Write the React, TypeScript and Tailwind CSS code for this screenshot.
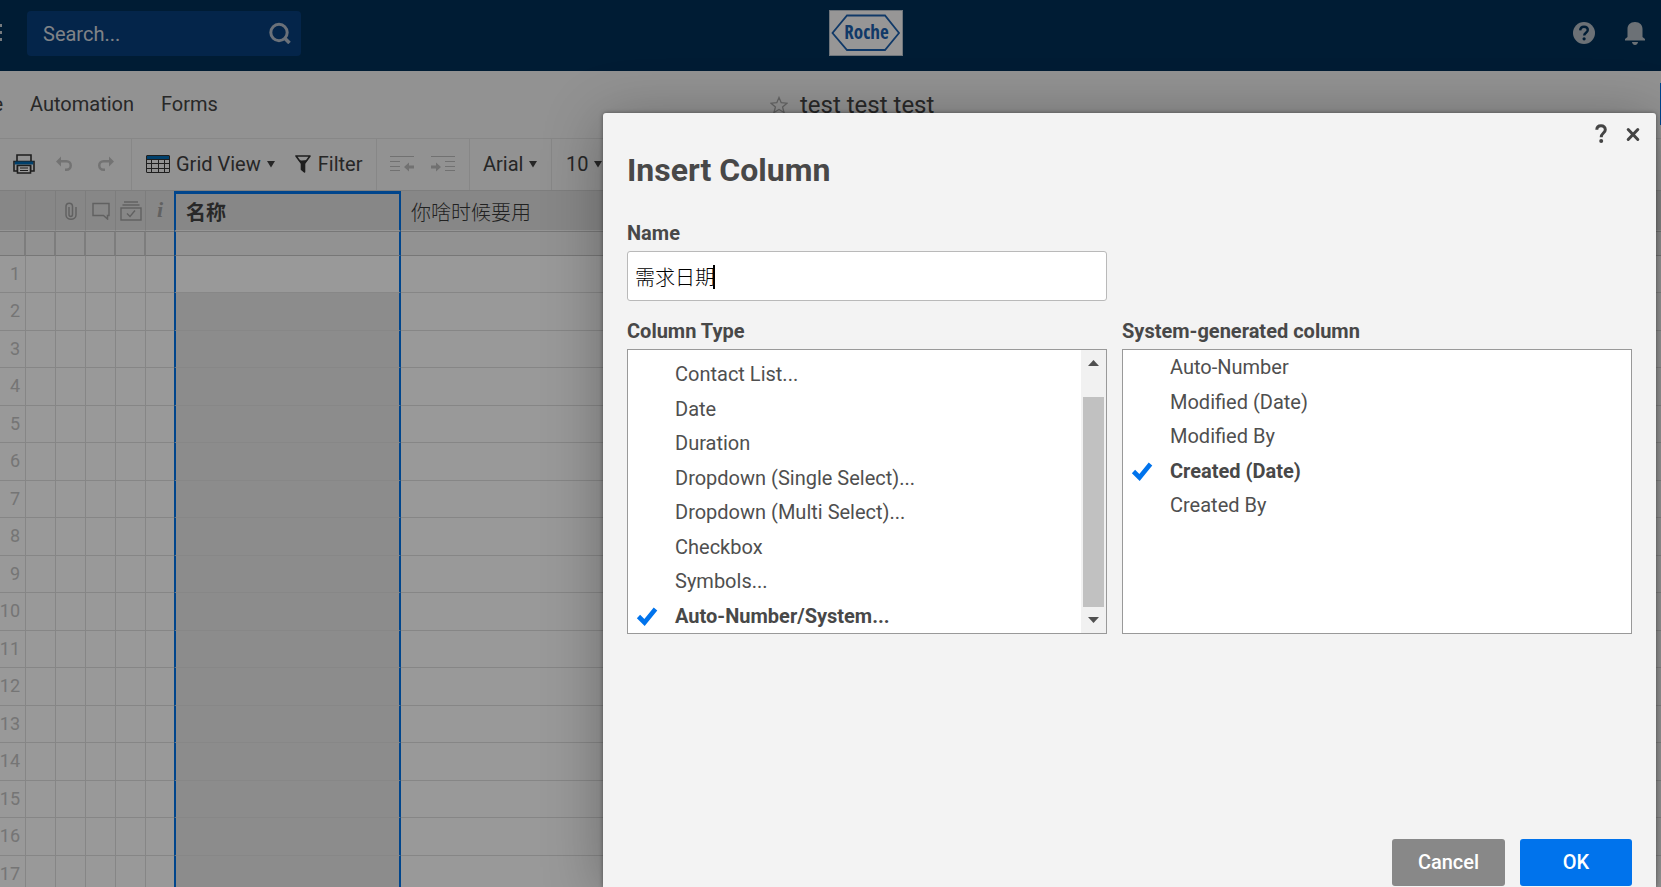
import { useState } from "react";
import type { ReactNode } from "react";

const COLUMN_TYPES = [
  "Contact List...",
  "Date",
  "Duration",
  "Dropdown (Single Select)...",
  "Dropdown (Multi Select)...",
  "Checkbox",
  "Symbols...",
  "Auto-Number/System...",
];

const SYSTEM_COLUMNS = ["Auto-Number", "Modified (Date)", "Modified By", "Created (Date)", "Created By"];

const ROWS = Array.from({ length: 17 }, (_, i) => i + 1);

function Caret() {
  return (
    <svg className="h-2 w-2 shrink-0" viewBox="0 0 8 8" aria-hidden="true">
      <path d="M0 1h8L4 7.500z" fill="currentColor" />
    </svg>
  );
}

function Logo() {
  return (
    <svg className="h-[46px] w-[74px]" viewBox="0 0 74 46" role="img" aria-label="Roche">
      <rect x="0.500" y="0.500" width="73" height="45" fill="#fcfbfa" stroke="#b9c3cd" />
      <path d="M18 5.500h38l14 17.500-14 17H18L3.500 23z" fill="none" stroke="#1c5fae" strokeWidth="1.800" />
      <text x="37.500" y="29" textAnchor="middle" fontFamily="Open Sans Condensed, Roboto Condensed, sans-serif" fontWeight="700" fontSize="19" fill="#1c5fae">
        Roche
      </text>
    </svg>
  );
}

function Header() {
  return (
    <header className="flex h-[71px] items-center bg-[#003057] pb-[5px] text-[#e6eaee]">
      <div className="flex flex-1 items-center">
        <svg className="h-5 w-[2px]" viewBox="0 0 2 20" aria-hidden="true">
          <path d="M0 1h2v3H0zM0 8h2v3H0zM0 15h2v3H0z" fill="#c5ccd3" />
        </svg>
        <label className="ml-[25px] flex h-[45px] w-[274px] items-center rounded-sm bg-[#073e7c] pr-[10px] pl-4">
          <input
            aria-label="Search"
            placeholder="Search..."
            className="min-w-0 flex-1 bg-transparent pt-px text-[20px] outline-none placeholder:text-[#d5dae0]"
          />
          <svg className="size-[22px]" viewBox="0 0 22 22" fill="none" stroke="#b3bdca" aria-hidden="true">
            <circle cx="10" cy="10.500" r="8.200" strokeWidth="3" />
            <path d="M15.500 16l5 5" strokeWidth="3.500" />
          </svg>
        </label>
      </div>
      <div className="ml-[86px]">
        <Logo />
      </div>
      <div className="flex flex-1 items-center justify-end gap-[30px] pr-4 text-[#b5bdc5]">
        <button aria-label="Help">
          <svg className="block size-[22px]" viewBox="0 0 22 22" aria-hidden="true">
            <circle cx="11" cy="11" r="11" fill="currentColor" />
            <path d="M7.200 8.400C7.300 6 8.800 4.700 11 4.700s3.800 1.300 3.800 3.400c0 2.600-3.600 2.800-3.600 5.500" fill="none" stroke="#003057" strokeWidth="2.400" />
            <circle cx="11.100" cy="16.800" r="1.600" fill="#003057" />
          </svg>
        </button>
        <button aria-label="Notifications">
          <svg className="block h-6 w-5" viewBox="0 0 20 24" aria-hidden="true">
            <path d="M10 1c4.800 0 7.500 3 7.500 7v8l2.500 2v1.500H0V18l2.500-2V8c0-4 2.700-7 7.500-7z" fill="currentColor" />
            <path d="M7 21h6c0 1.500-1.300 3-3 3s-3-1.500-3-3z" fill="currentColor" />
          </svg>
        </button>
      </div>
    </header>
  );
}

function MenuBar() {
  return (
    <div className="flex h-[68px] items-center border-b border-[#e2e2e2] text-[#444]">
      <nav className="-ml-[30px] flex w-[800px] shrink-0 items-center gap-[27px] pb-[2px] text-[20px]">
        <a href="#file" className="w-[33px] text-right">File</a>
        <a href="#automation">Automation</a>
        <a href="#forms">Forms</a>
      </nav>
      <div className="flex flex-1 items-center gap-3">
        <svg className="size-[18px]" viewBox="0 0 18 18" fill="none" stroke="#a8a8a8" strokeWidth="1.300" aria-hidden="true">
          <path d="M9 1.500l2.200 5.200 5.800.500-4.400 3.700 1.400 5.600-5-3-5 3 1.400-5.600L1 7.200l5.800-.500z" />
        </svg>
        <h1 className="pt-px text-[24px]">test test test</h1>
      </div>
      <div className="-mt-px h-[42px] w-px bg-[#0073ec]" />
    </div>
  );
}

function Toolbar() {
  return (
    <div className="flex h-[52px] items-stretch border-b border-[#d2d2d2] text-[20px] text-[#404040]">
      <div className="flex w-[132px] items-center border-r border-[#e2e2e2] pb-[2px] pl-[13px]">
        <button aria-label="Print">
          <svg className="block h-5 w-[22px]" viewBox="0 0 22 20" aria-hidden="true">
            <path d="M4 1h14v7H4z" fill="none" stroke="#333" strokeWidth="1.600" />
            <path d="M1 7.500h20V17h-3.500v-5h-13v5H1z" fill="#f3f3f3" stroke="#333" strokeWidth="1.600" />
            <path d="M1.800 7.500h18.400v3H1.800z" fill="#006bb5" />
            <path d="M4.500 11.500h13V19h-13z" fill="#fff" stroke="#333" strokeWidth="1.600" />
            <path d="M7 14h8M7 16.500h8" stroke="#333" strokeWidth="1.200" />
          </svg>
        </button>
        <button aria-label="Undo" className="ml-[21px] text-[#c0c0c0]">
          <svg className="block h-4 w-[17px]" viewBox="0 0 17 16" aria-hidden="true">
            <path d="M0 5.500L5 .500V4h5.500a5.500 5.500 0 0 1 0 11H9v-2.500h1.500a3 3 0 0 0 0-6H5v4z" fill="currentColor" />
          </svg>
        </button>
        <button aria-label="Redo" className="ml-[24px] text-[#c0c0c0]">
          <svg className="block h-4 w-[17px] -scale-x-100" viewBox="0 0 17 16" aria-hidden="true">
            <path d="M0 5.500L5 .500V4h5.500a5.500 5.500 0 0 1 0 11H9v-2.500h1.500a3 3 0 0 0 0-6H5v4z" fill="currentColor" />
          </svg>
        </button>
      </div>
      <div className="flex w-[245px] items-center border-r border-[#e2e2e2] pb-[2px] pl-[14px]">
        <button className="flex items-center gap-[6px]">
          <svg className="h-[18px] w-6" viewBox="0 0 24 18" aria-hidden="true">
            <rect x="0.500" y="0.500" width="23" height="17" rx="0.500" fill="#f3f3f3" stroke="#333" />
            <path d="M1 1h22v3H1z" fill="#006bb5" />
            <path d="M1 4.500h22M1 8.500h22M1 13.500h22M5.500 4.500v13M12.500 4.500v13M18.500 4.500v13" stroke="#333" />
          </svg>
          Grid View
          <Caret />
        </button>
        <button className="ml-5 flex items-center gap-[7px]">
          <svg className="h-[18px] w-4" viewBox="0 0 16 18" aria-hidden="true">
            <path d="M1 1h14L9.500 8.500V17l-3-2.500v-6z" fill="none" stroke="#333" strokeWidth="1.600" strokeLinejoin="round" />
            <path d="M3.500 5l3 .500 6-.500-3 4v8l-3-2.500V9z" fill="#333" />
          </svg>
          Filter
        </button>
      </div>
      <div className="flex w-[93px] items-center gap-[17px] border-r border-[#e2e2e2] pb-[2px] pl-[13px] text-[#bcbcbc]">
        <button aria-label="Outdent">
          <svg className="block h-4 w-6" viewBox="0 0 24 16" aria-hidden="true">
            <path d="M0 .500h24M0 5.500h10M0 10.500h10M0 14.500h10" stroke="currentColor" />
            <path d="M14 11l5-4.500V9.500h5v3h-5v3z" fill="currentColor" />
          </svg>
        </button>
        <button aria-label="Indent">
          <svg className="block h-4 w-6" viewBox="0 0 24 16" aria-hidden="true">
            <path d="M0 .500h24M14 5.500h10M14 10.500h10M14 14.500h10" stroke="currentColor" />
            <path d="M10 11L5 6.500V9.500H0v3h5v3z" fill="currentColor" />
          </svg>
        </button>
      </div>
      <div className="flex w-[82px] items-center border-r border-[#e2e2e2] pb-[2px] pl-[13px]">
        <button className="flex items-center gap-[6px]">
          Arial
          <Caret />
        </button>
      </div>
      <div className="flex items-center pb-[2px] pl-[14px]">
        <button className="flex items-center gap-[6px]">
          10
          <Caret />
        </button>
      </div>
    </div>
  );
}

function HeadIcon({ children, width }: { children?: ReactNode; width: string }) {
  return (
    <th className={`${width} border-r border-b border-r-[#d0d0d0] border-b-[#f8f8f8] p-0`}>
      <div className="flex items-center justify-center text-[#a2a2a2]">{children}</div>
    </th>
  );
}

function Grid() {
  return (
    <table className="w-full table-fixed border-separate border-spacing-0 bg-white">
      <thead>
        <tr className="h-10 bg-[#e1e1e1]">
          <HeadIcon width="w-[26px]" />
          <HeadIcon width="w-[30px]" />
          <HeadIcon width="w-[30px]">
            <svg className="h-[18px] w-3" viewBox="0 0 12 18" fill="none" stroke="currentColor" strokeWidth="1.500" aria-label="Attachments">
              <path d="M4 5v7.500c0 2.500 3.500 2.500 3.500 0V4.500c0-4.500-6.500-4.500-6.500 0V13c0 5.500 10 5.500 10 0V5" />
            </svg>
          </HeadIcon>
          <HeadIcon width="w-[30px]">
            <svg className="h-[18px] w-[18px]" viewBox="0 0 18 18" fill="none" stroke="currentColor" strokeWidth="1.500" aria-label="Comments">
              <path d="M1 1.500h16v12h-1.500v3.500l-4-3.500H1z" />
            </svg>
          </HeadIcon>
          <HeadIcon width="w-[30px]">
            <svg className="h-5 w-[22px]" viewBox="0 0 22 20" fill="none" stroke="currentColor" strokeWidth="1.400" aria-label="Proofs">
              <path d="M4 1h14M2.500 4h17M1 7h20v12H1zM7 12.500l3 3 5-6" />
            </svg>
          </HeadIcon>
          <th className="w-[28px] border-b border-[#f8f8f8] p-0 pb-[2px] text-center font-['Liberation_Serif',serif] text-[22px] leading-5 font-bold text-[#a2a2a2] italic">
            i
          </th>
          <th className="w-[227px] border-x-2 border-t-[3px] border-b border-x-[#0073ea] border-t-[#0073ea] border-b-[#f8f8f8] p-0 pt-[2px] pl-[10px] text-left text-[20px] leading-6 font-bold text-[#444]">
            名称
          </th>
          <th className="border-b border-[#f8f8f8] p-0 pt-1 pl-[10px] text-left text-[20px] leading-6 font-light text-[#383838]">
            你啥时候要用
          </th>
        </tr>
        <tr className="h-[25px] bg-[#f3f3f3]">
          {["a", "b", "c", "d", "e"].map((k) => (
            <td key={k} className="border-y border-r-2 border-y-[#c6c6c6] border-r-[#d0d0d0] p-0" />
          ))}
          <td className="border-y border-[#c6c6c6] p-0" />
          <td className="border-x-2 border-y border-x-[#0073ea] border-y-[#c6c6c6] p-0" />
          <td className="border-y border-[#c6c6c6] p-0" />
        </tr>
      </thead>
      <tbody>
        {ROWS.map((n) => (
          <tr key={n} className="group h-[37px] even:h-[38px]">
            <th className="border-r border-b border-[#e0e0e0] p-0 font-normal">
              <div className="flex justify-end pr-[5px] pb-px text-[18px] leading-6 text-[#c4c4c4]">{n}</div>
            </th>
            {["b", "c", "d", "e"].map((k) => (
              <td key={k} className="border-r border-b border-[#e0e0e0] p-0" />
            ))}
            <td className="border-b border-[#e0e0e0] p-0" />
            <td className="border-x-2 border-b border-x-[#0073ea] border-b-[#e2e2e2] bg-[#e9e9e9] p-0 group-first:bg-white" />
            <td className="border-b border-[#e0e0e0] p-0" />
          </tr>
        ))}
      </tbody>
    </table>
  );
}

function OptionList({
  name,
  options,
  value,
  onChange,
}: {
  name: string;
  options: string[];
  value: string;
  onChange: (v: string) => void;
}) {
  return (
    <div className="min-w-0 flex-1">
      {options.map((o) => (
        <label
          key={o}
          className="flex h-[34px] items-center text-[20px] text-[#4f4f4f] even:h-[35px] has-checked:font-bold has-checked:text-[#484848]"
        >
          <input type="radio" name={name} checked={value === o} onChange={() => onChange(o)} className="size-0 appearance-none" />
          <span className="flex w-[47px] pl-2">
            {value === o && (
              <svg className="h-5 w-[22px]" viewBox="0 0 22 20" aria-hidden="true">
                <path d="M2.500 10.500l6 6L19.500 3" fill="none" stroke="#0073ec" strokeWidth="4.600" />
              </svg>
            )}
          </span>
          {o}
        </label>
      ))}
    </div>
  );
}

function InsertColumnDialog() {
  const [name, setName] = useState("需求日期");
  const [type, setType] = useState("Auto-Number/System...");
  const [system, setSystem] = useState("Created (Date)");
  return (
    <div
      role="dialog"
      aria-labelledby="dialog-title"
      className="absolute top-[113px] right-[5px] bottom-0 left-[603px] flex flex-col rounded-t-[3px] bg-[#f3f3f3] px-6 text-[#484848] shadow-[0_0_4px_rgba(0,0,0,0.4),0_8px_60px_rgba(0,0,0,0.3)]"
    >
      <div className="-mr-2 flex h-[38px] items-end justify-end gap-[19px] pb-2">
        <button aria-label="Help">
          <svg className="block h-[19px] w-3" viewBox="0 0 12 19" aria-hidden="true">
            <path d="M1.800 5.800C1.800 3 3.300 1.700 6 1.700s4.300 1.500 4.300 4c0 3.200-4.100 3.600-4.100 7.500" fill="none" stroke="#444" strokeWidth="3" />
            <circle cx="6.200" cy="17" r="2" fill="#444" />
          </svg>
        </button>
        <button aria-label="Close" className="pb-px">
          <svg className="block h-[15px] w-[14px]" viewBox="0 0 14 15" aria-hidden="true">
            <path d="M2.200 2.500l9.600 10M11.800 2.500l-9.600 10" stroke="#444" strokeWidth="3" strokeLinecap="round" />
          </svg>
        </button>
      </div>
      <h2 id="dialog-title" className="text-[32px] leading-[38px] font-bold">
        Insert Column
      </h2>
      <div className="mt-8 grid grid-cols-[480px_1fr] gap-x-[15px]">
        <div className="flex flex-col">
          <label htmlFor="column-name" className="h-[30px] text-[20px] leading-6 font-bold">
            Name
          </label>
          <div className="relative">
            <input
              id="column-name"
              value={name}
              onChange={(e) => setName(e.target.value)}
              className="block h-[50px] w-full rounded-[3px] border border-[#b9b9b9] bg-white px-[7px] text-[20px] font-light text-black outline-none"
            />
            <span className="absolute top-[14px] left-[86px] h-6 w-[2px] bg-black" />
          </div>
        </div>
      </div>
      <div className="mt-[18px] grid grid-cols-[480px_1fr] gap-x-[15px]">
        <fieldset>
          <legend className="h-[30px] text-[20px] leading-6 font-bold">Column Type</legend>
          <div className="flex h-[285px] items-end overflow-hidden border border-[#999] bg-white">
            <OptionList name="column-type" options={COLUMN_TYPES} value={type} onChange={setType} />
            <div className="flex h-full w-[25px] flex-col items-center justify-between bg-[#f1f1f1] py-[10px] text-[#505050]">
              <svg className="h-[6px] w-[11px]" viewBox="0 0 11 6" aria-hidden="true">
                <path d="M0 6h11L5.500 0z" fill="currentColor" />
              </svg>
              <div className="mt-[31px] mb-[10px] w-[21px] flex-1 bg-[#c1c1c1]" />
              <svg className="h-[6px] w-[11px]" viewBox="0 0 11 6" aria-hidden="true">
                <path d="M0 0h11L5.500 6z" fill="currentColor" />
              </svg>
            </div>
          </div>
        </fieldset>
        <fieldset>
          <legend className="h-[30px] text-[20px] leading-6 font-bold">System-generated column</legend>
          <div className="flex h-[285px] items-start border border-[#999] bg-white">
            <OptionList name="system-column" options={SYSTEM_COLUMNS} value={system} onChange={setSystem} />
          </div>
        </fieldset>
      </div>
      <div className="mt-auto flex justify-end gap-[15px] pb-px text-[20px] font-medium text-white">
        <button className="h-[47px] w-[113px] rounded-[3px] bg-[#888] pb-px">Cancel</button>
        <button className="h-[47px] w-28 rounded-[3px] bg-[#0073ec] pb-px">OK</button>
      </div>
    </div>
  );
}

export default function App() {
  return (
    <div className="relative h-screen overflow-hidden bg-[#f3f3f3] font-[Roboto,'Noto_Sans_CJK_SC',sans-serif]">
      <Header />
      <MenuBar />
      <Toolbar />
      <Grid />
      <div className="absolute inset-0 bg-black/40" />
      <InsertColumnDialog />
    </div>
  );
}
